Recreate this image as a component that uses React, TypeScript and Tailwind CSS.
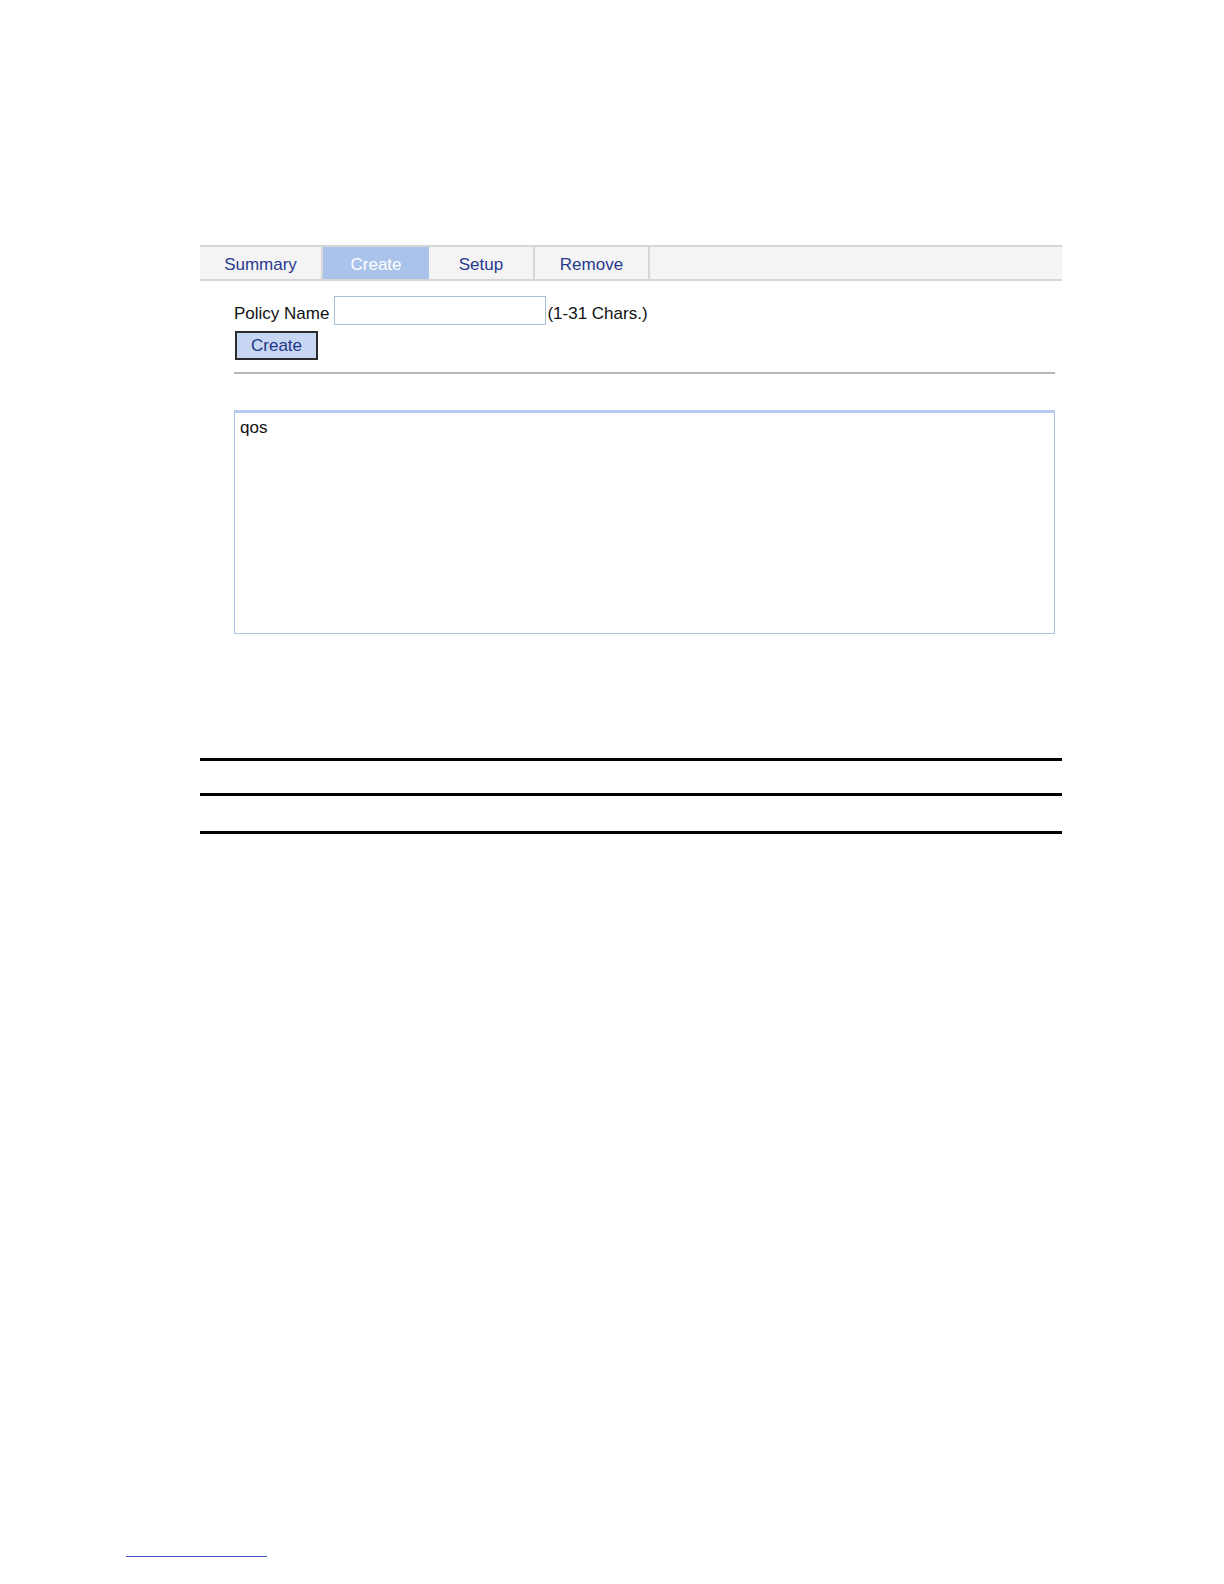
export default function App() {
    const tabs = [
        { label: 'Summary', w: 'w-[123px]', active: false },
        { label: 'Create', w: 'w-[106px]', active: true },
        { label: 'Setup', w: 'w-[106px]', active: false },
        { label: 'Remove', w: 'w-[115px]', active: false },
    ]

    return (
        <div className="w-[1224px] h-[1584px] bg-white font-['Liberation_Sans',Arial,sans-serif] text-[17px] text-[#111]">
            <div className="ml-[200px] w-[862px] pt-[245px]">
                {/* tab bar */}
                <div className="flex h-[36px] bg-[#f4f4f4] border-t-2 border-b-2 border-[#d6d6d6]">
                    {tabs.map((t) => (
                        <div
                            key={t.label}
                            className={
                                t.active
                                    ? `${t.w} flex items-center justify-center pt-[4px] bg-[#a9c3ea] text-white`
                                    : `${t.w} flex items-center justify-center pt-[4px] text-[#283a8c] border-r-2 border-[#d6d6d6]`
                            }
                        >
                            {t.label}
                        </div>
                    ))}
                </div>

                <div className="ml-[34px] w-[821px]">
                    <div className="mt-[15px] flex items-end h-[29px]">
                        <span className="mr-[5px] leading-[20px] mb-[1px]">Policy Name</span>
                        <div className="w-[212px] h-[29px] border border-[#a7bddb] bg-white" />
                        <span className="ml-[1px] leading-[20px] mb-[1px]">(1-31 Chars.)</span>
                    </div>
                    <div className="mt-[6px] ml-[1px] w-[83px] h-[29px] border-2 border-[#2b2b2b] bg-[#c7d7f3] text-[#1e3585] flex items-center justify-center pt-[1px]">
                        Create
                    </div>
                    <div className="mt-[12px] h-[2px] bg-[#b9b9b2]" />
                    <div className="mt-[36px] h-[224px] border border-[#a9c4e8] border-t-[3px] border-t-[#b7cdef] px-[5px] pt-[2px]">
                        qos
                    </div>
                </div>

                {/* table rules */}
                <div className="mt-[124px] h-[3px] bg-black" />
                <div className="mt-[32px] h-[3px] bg-black" />
                <div className="mt-[35px] h-[3px] bg-black" />
            </div>

            <div className="ml-[126px] mt-[722px] w-[141px] h-[1px] bg-[#3a5bc7]" />
        </div>
    )
}
